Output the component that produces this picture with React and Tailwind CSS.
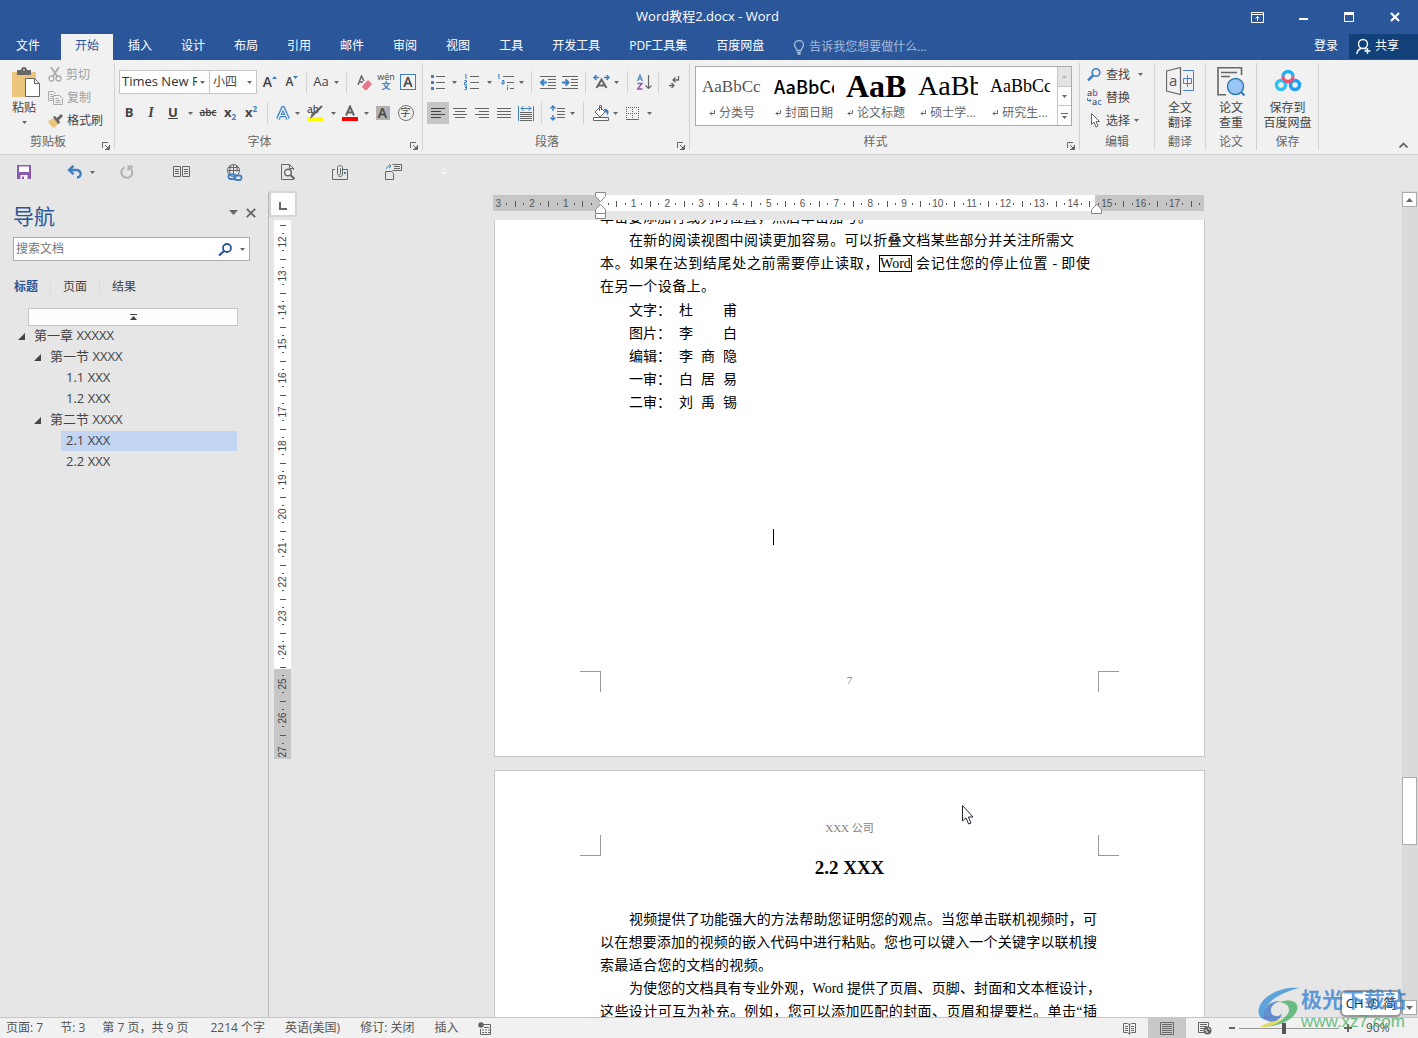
import React from "react";

const tabs = ["插入", "设计", "布局", "引用", "邮件", "审阅", "视图", "工具", "开发工具", "PDF工具集", "百度网盘"];

const styleItems = [
  { label: "分类号", preview: "text-[17px] text-[#555] font-['Liberation_Serif',serif]" },
  { label: "封面日期", preview: "text-[18px] text-black font-medium font-['Noto_Sans_CJK_SC',sans-serif]" },
  { label: "论文标题", preview: "text-[32px] text-black font-bold font-['Liberation_Serif',serif]" },
  { label: "硕士学...", preview: "text-[28px] text-black font-['Liberation_Serif',serif]" },
  { label: "研究生...", preview: "text-[18px] text-black font-['Liberation_Serif',serif]" },
];

const outline = [
  { text: "第一章 XXXXX", pad: "ml-3", open: true },
  { text: "第一节 XXXX", pad: "ml-7", open: true },
  { text: "1.1 XXX", pad: "ml-[61px]" },
  { text: "1.2 XXX", pad: "ml-[61px]" },
  { text: "第二节 XXXX", pad: "ml-7", open: true },
  { text: "2.1 XXX", pad: "ml-[61px]", active: true },
  { text: "2.2 XXX", pad: "ml-[61px]" },
];

const credits = [
  ["文字：", ["杜", "甫"]],
  ["图片：", ["李", "白"]],
  ["编辑：", ["李", "商", "隐"]],
  ["一审：", ["白", "居", "易"]],
  ["二审：", ["刘", "禹", "锡"]],
];

const hRuler = [3, 2, 1, "", 1, 2, 3, 4, 5, 6, 7, 8, 9, 10, 11, 12, 13, 14, 15, 16, 17];
const vRuler = [12, 13, 14, 15, 16, 17, 18, 19, 20, 21, 22, 23, 24, 25, 26, 27];

const Icon = ({ w = 16, h = 16, children, className = "" }) => (
  <svg
    width={w}
    height={h}
    viewBox={`0 0 ${w} ${h}`}
    fill="none"
    stroke="#666"
    className={`shrink-0 ${className}`}
    aria-hidden="true"
  >
    {children}
  </svg>
);

const Caret = ({ className = "" }) => (
  <Icon w={5} h={3} className={className}>
    <path d="M0 0h5L2.5 3z" fill="#666" stroke="none" />
  </Icon>
);

const Tool = ({ w = "w-[22px]", label, children, className = "" }) => (
  <button
    aria-label={label}
    className={`h-[22px] shrink-0 flex items-center justify-center ${w} ${className}`}
  >
    {children}
  </button>
);

const Drop = ({ w = "w-2" }) => (
  <Tool w={w} label="更多选项">
    <Caret />
  </Tool>
);

const Sep = ({ w = "w-2" }) => (
  <span className={`h-[22px] shrink-0 flex justify-center ${w}`}>
    <span className="w-px bg-[#d2d2d2]" />
  </span>
);

const Launcher = () => (
  <button aria-label="对话框启动器" className="absolute right-1 bottom-0">
    <Icon w={8} h={8}>
      <path d="M.5 6V.5H6M3 3l3 3M7.5 3v4.5H3" />
      <path d="M7 4v3H4z" fill="#666" stroke="none" />
    </Icon>
  </button>
);

const Group = ({ label, width, children, launcher }) => (
  <section className={`relative shrink-0 flex flex-col border-r border-[#d2d2d2] ${width}`}>
    <div className="h-[71px] shrink-0">{children}</div>
    <div className="shrink-0 text-center leading-4 text-[#666]">{label}</div>
    {launcher && <Launcher />}
  </section>
);

const TitleBar = () => (
  <div className="flex h-[34px] items-center text-white">
    <div className="w-[181px]" />
    <h1 className="flex-1 text-center text-[13px]">Word教程2.docx - Word</h1>
    <button aria-label="功能区显示选项" className="flex w-[46px] justify-center">
      <Icon w={13} h={11}>
        <path d="M.5.5h12v10H.5zM.5 2.5h12M6.5 9V4.500M4.500 6.500l2-2 2 2" stroke="#fff" />
      </Icon>
    </button>
    <button aria-label="最小化" className="flex w-[46px] justify-center">
      <Icon w={9} h={8}>
        <path d="M0 6h9" stroke="#fff" strokeWidth="2" />
      </Icon>
    </button>
    <button aria-label="最大化" className="flex w-[46px] justify-center">
      <Icon w={10} h={10}>
        <path d="M.5.5h9v9h-9z" stroke="#fff" />
        <path d="M0 1.500h10" stroke="#fff" strokeWidth="3" />
      </Icon>
    </button>
    <button aria-label="关闭" className="flex w-[46px] justify-center">
      <Icon w={10} h={10}>
        <path d="M1 1l8 8M9 1L1 9" stroke="#fff" strokeWidth="2.200" />
      </Icon>
    </button>
  </div>
);

const TabBar = () => (
  <nav className="flex h-[26px] items-stretch gap-px text-white">
    <button className="w-[56px] shrink-0 pb-[2px]">文件</button>
    <button className="ml-1 shrink-0 bg-[#f1f1f1] px-[14px] pb-[2px] text-[#2b579a]">开始</button>
    {tabs.map((tab) => (
      <button key={tab} className="shrink-0 whitespace-nowrap px-[14px] pb-[2px]">
        {tab}
      </button>
    ))}
    <button className="ml-[10px] flex items-center gap-1 whitespace-nowrap px-1 text-[#a5bad8]">
      <Icon w={12} h={15}>
        <path d="M4 10.500C4 8.500 1.500 7.500 1.500 5a4.500 4.500 0 0 1 9 0c0 2.500-2.500 3.500-2.500 5.500zM4 12.500h4M4.500 14h3" stroke="#a5bad8" strokeWidth="1.300" />
      </Icon>
      告诉我您想要做什么...
    </button>
    <div className="flex-1" />
    <button className="shrink-0 px-[10px] pb-[2px]">登录</button>
    <button className="mb-px flex w-[69px] shrink-0 items-center gap-1 bg-[#124078] pl-[7px]">
      <Icon w={15} h={17}>
        <circle cx="7" cy="6" r="4.500" stroke="#fff" strokeWidth="1.400" />
        <path d="M.8 16c.3-3 2-4.500 4-5.500M9 10.500l1.500 1M11.500 10v6M8.500 13h6" stroke="#fff" strokeWidth="1.400" />
      </Icon>
      <span className="pb-[2px]">共享</span>
    </button>
  </nav>
);

const Clipboard = () => (
  <Group label={<span className="mr-[18px]">剪贴板</span>} width="w-[115px]" launcher>
    <div className="flex h-full">
      <button className="flex w-12 shrink-0 flex-col items-center pt-1">
        <Icon w={30} h={31} className="ml-1">
          <path d="M1 5h24v25H1z" fill="#ecc57c" stroke="none" />
          <path d="M6 8V3h4c0-4 6-4 6 0h4v5z" fill="#666" stroke="none" />
          <path d="M12 3h2" stroke="#fff" />
          <path d="M14.500 11.500h9l5 5v13h-14z" fill="#fff" />
          <path d="M23.500 11.500v5h5" />
        </Icon>
        <span className="mt-px leading-[18px]">粘贴</span>
        <Caret className="mt-1" />
      </button>
      <div className="flex flex-col">
        <button className="flex h-[23px] items-center gap-1 text-[#a0a0a0]">
          <Icon w={14} h={15}>
            <path d="M3 0l6 9M11 0L5 9" stroke="#aaa" strokeWidth="1.800" />
            <circle cx="3.500" cy="11.500" r="2.500" stroke="#aaa" strokeWidth="1.300" />
            <circle cx="10.500" cy="11.500" r="2.500" stroke="#aaa" strokeWidth="1.300" />
          </Icon>
          剪切
        </button>
        <button className="flex h-[23px] items-center gap-1 text-[#a0a0a0]">
          <Icon w={15} h={14}>
            <path d="M5 9.500H.5v-9h5l2 2M2 3.500h3M2 5.500h3M2 7.500h3" stroke="#aaa" />
            <path d="M5.500 4.500h6l3 3v6h-9zM7.500 7.500h3M7.500 9.500h5M7.500 11.500h5" stroke="#aaa" />
          </Icon>
          复制
        </button>
        <button className="flex h-[23px] items-center gap-1">
          <Icon w={15} h={14}>
            <path d="M6 4L0 7c1 3 3 5 6 7l5-5z" fill="#ecc57c" stroke="none" />
            <path d="M5 3l2-1 2 2 4-4 2 2-4 4 1 3-2 1z" fill="#666" stroke="none" />
          </Icon>
          格式刷
        </button>
      </div>
    </div>
  </Group>
);

const FontGroup = () => (
  <Group label={<span className="mr-[18px]">字体</span>} width="w-[308px]" launcher>
    <div className="flex h-[38px] items-center pl-1">
      <div className="flex h-6 w-[91px] items-center border border-[#c6c6c6] bg-white pr-1">
        <select aria-label="字体" className="mr-[3px] min-w-0 flex-1 appearance-none pl-[2px] text-[13px] text-[#333]">
          <option>Times New Roman</option>
        </select>
        <Caret />
      </div>
      <div className="-ml-px mr-px flex h-6 w-12 items-center border border-[#c6c6c6] bg-white pr-1">
        <select aria-label="字号" className="min-w-0 flex-1 appearance-none pl-[3px]">
          <option>小四</option>
        </select>
        <Caret />
      </div>
      <Tool w="w-6" label="增大字号">
        <span className="text-sm font-semibold">A</span>
        <Icon w={5} h={3} className="mb-[10px]"><path d="M0 3h5L2.500 0z" fill="#3f7fbf" stroke="none" /></Icon>
      </Tool>
      <Tool w="w-5" label="减小字号">
        <span className="text-xs font-semibold">A</span>
        <Icon w={5} h={3} className="mb-[10px]"><path d="M0 0h5L2.500 3z" fill="#3f7fbf" stroke="none" /></Icon>
      </Tool>
      <Sep />
      <Tool w="w-[22px]" label="更改大小写"><span className="text-[13px]">Aa</span></Tool>
      <Drop />
      <Sep w="w-[13px]" />
      <Tool label="清除所有格式">
        <Icon w={15} h={15}>
          <path d="M7 9l4-4 4 4-5 6H8l-3-3z" fill="#e8798a" stroke="none" />
          <path d="M1 10L4.500 1 7 6M2.500 7H6" strokeWidth="1.500" />
        </Icon>
      </Tool>
      <Tool label="拼音指南" className="flex-col">
        <span className="text-[9px] leading-[8px]">wén</span>
        <span className="text-[9px] font-bold leading-[10px] text-[#3f7fbf]">文</span>
      </Tool>
      <Tool label="字符边框">
        <span className="flex h-4 w-4 items-center justify-center border border-[#3f7fbf] text-sm font-semibold">A</span>
      </Tool>
    </div>
    <div className="flex h-6 items-center pl-[3px]">
      <Tool label="加粗"><b className="text-[13px]">B</b></Tool>
      <Tool label="倾斜"><i className="text-sm font-bold font-['Liberation_Serif',serif]">I</i></Tool>
      <Tool label="下划线"><b className="text-[13px] underline">U</b></Tool>
      <Drop w="w-3" />
      <Tool w="w-6" label="删除线"><s className="text-[10px] font-semibold">abc</s></Tool>
      <Tool w="w-5" label="下标">
        <b className="text-[13px]">x</b><b className="mt-2 text-[8px] text-[#3f7fbf]">2</b>
      </Tool>
      <Tool label="上标">
        <b className="text-[13px]">x</b><b className="mb-2 text-[8px] text-[#3f7fbf]">2</b>
      </Tool>
      <Sep w="w-[11px]" />
      <Tool w="w-5" label="文本效果">
        <Icon w={14} h={15}>
          <path d="M2 13L7 1.500 12 13M4 9.500h6" stroke="#b4d4f0" strokeWidth="5" strokeLinejoin="round" />
          <path d="M2 13L7 1.500 12 13M4 9.500h6" stroke="#3f7fbf" strokeWidth="3.200" />
          <path d="M2 13L7 2 12 13M4 9.500h6" stroke="#fff" strokeWidth="1.200" />
        </Icon>
      </Tool>
      <Drop />
      <Tool w="w-7" label="突出显示" className="flex-col">
        <Icon w={16} h={16}>
          <path d="M0 12h16v4H0z" fill="#ff0" stroke="none" />
          <path d="M15 1L8 8l-3 3 1-4" strokeWidth="2" />
          <text x="0" y="8" fontSize="10" fontWeight="600" fill="#555" stroke="none">ab</text>
        </Icon>
      </Tool>
      <Drop />
      <Tool w="w-[25px]" label="字体颜色">
        <Icon w={16} h={16}>
          <path d="M0 12h16v4H0z" fill="#f00" stroke="none" />
          <path d="M4 10.500L8 1.500l4 9M5.500 7.500h5" strokeWidth="2" />
        </Icon>
      </Tool>
      <Drop />
      <Tool w="w-[25px]" label="字符底纹">
        <span className="flex h-[14px] w-[14px] items-center justify-center bg-[#b1b1b1] text-sm font-semibold">A</span>
      </Tool>
      <Tool w="w-[21px]" label="带圈字符">
        <span className="flex h-4 w-4 items-center justify-center rounded-full border border-[#777] text-[10px]">字</span>
      </Tool>
    </div>
  </Group>
);

const ParagraphGroup = () => (
  <Group label={<span className="mr-[18px]">段落</span>} width="w-[267px]" launcher>
    <div className="flex h-[38px] items-center pl-1">
      <Tool label="项目符号">
        <Icon w={14} h={16}>
          <path d="M5 2.500h9M5 8.500h9M5 14.500h9" />
          <path d="M0 2.500h3M0 8.500h3M0 14.500h3" stroke="#3f7fbf" strokeWidth="3" />
        </Icon>
      </Tool>
      <Drop w="w-[10px]" />
      <Tool w="w-[26px]" label="编号">
        <Icon w={16} h={16}>
          <path d="M6 2.500h9M6 8.500h9M6 14.500h9" />
          <path d="M1 1l1-.500V5M.5 6.500h2v2h-2v2H3M.5 12h2v3.500h-2M1 13.500h1.500" stroke="#3f7fbf" />
        </Icon>
      </Tool>
      <Drop />
      <Tool w="w-6" label="多级列表">
        <Icon w={17} h={16}>
          <path d="M6 2.500h11M10 8.500h7M13 14.500h4" />
          <path d="M1 1l1-.500V5M5 6.500h2V10H5V8h2M10.500 11v1M10.500 13v3" stroke="#3f7fbf" />
        </Icon>
      </Tool>
      <Drop />
      <Sep w="w-3" />
      <Tool label="减少缩进量">
        <Icon w={16} h={14}>
          <path d="M0 1.500h16M8 4.500h8M8 7.500h8M8 10.500h8M0 13.500h16" />
          <path d="M7 7.500H1.500M4 4.500l-3 3 3 3" stroke="#3f7fbf" strokeWidth="2" />
        </Icon>
      </Tool>
      <Tool label="增加缩进量">
        <Icon w={16} h={14}>
          <path d="M0 1.500h16M9 4.500h7M9 7.500h7M9 10.500h7M0 13.500h16" />
          <path d="M0 7.500h6M3.500 4.500l3 3-3 3" stroke="#3f7fbf" strokeWidth="2" />
        </Icon>
      </Tool>
      <Sep />
      <Tool w="w-6" label="中文版式">
        <Icon w={17} h={14}>
          <path d="M3.500 13L8.500 4.500 13.500 13M5.500 10.500h6" strokeWidth="2" />
          <path d="M6 2.500H1M3.500 0L1 2.500 3.500 5M11 2.500h5M13.500 0L16 2.500 13.500 5" stroke="#3f7fbf" strokeWidth="1.400" />
        </Icon>
      </Tool>
      <Drop w="w-[6px]" />
      <Sep w="w-4" />
      <Tool w="w-[18px]" label="排序">
        <Icon w={15} h={16}>
          <path d="M.5 7L3 1l2.500 6M1.500 5h3" stroke="#3f7fbf" strokeWidth="1.200" />
          <path d="M.5 9.500h4.500l-4.500 5.500H5.500" stroke="#8e55a8" strokeWidth="1.400" />
          <path d="M11.500 1v13M8.500 11.500l3 3 3-3" strokeWidth="1.200" />
        </Icon>
      </Tool>
      <Sep w="w-[10px]" />
      <Tool label="显示编辑标记">
        <Icon w={11} h={14}>
          <path d="M9.500 1v4H4M6.500 2.500L4 5l2.500 2.500M0 10.500h5M2.500 8L5 10.500 2.500 13" strokeWidth="1.300" />
        </Icon>
      </Tool>
    </div>
    <div className="flex h-6 items-center pl-1">
      <Tool label="左对齐" className="bg-[#c5c5c5]">
        <Icon w={14} h={11}><path d="M0 .5h14M0 3.500h10M0 6.500h14M0 9.500h10" stroke="#444" /></Icon>
      </Tool>
      <Tool label="居中">
        <Icon w={14} h={11}><path d="M0 .5h14M2 3.500h10M0 6.500h14M2 9.500h10" /></Icon>
      </Tool>
      <Tool label="右对齐">
        <Icon w={14} h={11}><path d="M0 .5h14M4 3.500h10M0 6.500h14M4 9.500h10" /></Icon>
      </Tool>
      <Tool label="两端对齐">
        <Icon w={14} h={11}><path d="M0 .5h14M0 3.500h14M0 6.500h14M0 9.500h14" /></Icon>
      </Tool>
      <Tool label="分散对齐">
        <Icon w={16} h={15}>
          <path d="M2 6.500h12M2 8.500h12M2 10.500h12M2 12.500h12M2 14.500h12" />
          <path d="M.5 0v15M15.500 0v15M3 2.500h10M5.500 0L3 2.500 5.500 5M10.500 0L13 2.500 10.500 5" stroke="#3f7fbf" />
        </Icon>
      </Tool>
      <Sep />
      <Tool w="w-6" label="行和段落间距">
        <Icon w={15} h={16}>
          <path d="M7 3.500h8M7 6.500h8M7 9.500h8M7 12.500h8" />
          <path d="M3 6V1M.5 3.500L3 1l2.500 2.500M3 10v5M.5 12.500L3 15l2.500-2.500" stroke="#3f7fbf" strokeWidth="1.400" />
        </Icon>
      </Tool>
      <Drop w="w-[6px]" />
      <Sep w="w-4" />
      <Tool w="w-5" label="底纹">
        <Icon w={17} h={16}>
          <path d="M7 2l5 5-5 5-5-5zM6.500 6V.5h2V5" fill="#fff" />
          <path d="M11 4c4-.5 6 2 3.500 6.500C14 8 13 7 12 7z" fill="#3f7fbf" stroke="none" />
          <path d="M.5 12.500h15v3H.5z" fill="#fff" />
        </Icon>
      </Tool>
      <Drop />
      <Tool w="w-[26px]" label="边框">
        <Icon w={13} h={13}>
          <path d="M0 .5h13M.5 0v12M12.500 0v12M6.500 0v12M0 6.500h13" strokeDasharray="1 1" />
          <path d="M0 12.500h13" />
        </Icon>
      </Tool>
      <Drop />
    </div>
  </Group>
);

const StylesGroup = () => (
  <Group label={<span className="mr-[18px]">样式</span>} width="w-[390px]" launcher>
    <div className="flex h-full items-start pl-[5px] pt-[3px]">
      <div className="flex h-[60px] w-[377px] border border-[#ababab] bg-white">
        <div className="flex flex-1">
          {styleItems.map((s) => (
            <button key={s.label} className="w-[72px] shrink-0 px-[6px]">
              <span className={`flex h-[34px] items-center overflow-hidden leading-none ${s.preview}`}>
                AaBbCc
              </span>
              <span className="flex h-5 items-center justify-center gap-1 whitespace-nowrap text-[#666]">
                <Icon w={6} h={6}>
                  <path d="M5.500 0v3.500H1M3 1.500l-2 2 2 2" />
                </Icon>
                {s.label}
              </span>
            </button>
          ))}
        </div>
        <div className="flex w-[14px] flex-col border-l border-[#c6c6c6]">
          <button aria-label="上一行" className="flex flex-1 items-center justify-center bg-[#e3e3e3]">
            <Icon w={5} h={3}><path d="M0 3h5L2.500 0z" fill="#b5b5b5" stroke="none" /></Icon>
          </button>
          <button aria-label="下一行" className="flex flex-1 items-center justify-center border-y border-[#c6c6c6]">
            <Caret />
          </button>
          <button aria-label="其他" className="flex flex-1 items-center justify-center">
            <Icon w={7} h={6}>
              <path d="M0 .5h7" />
              <path d="M1 3h5L3.500 6z" fill="#666" stroke="none" />
            </Icon>
          </button>
        </div>
      </div>
    </div>
  </Group>
);

const EditGroup = () => (
  <Group label="编辑" width="w-[75px]">
    <div className="flex flex-col pl-[7px]">
      <button className="flex h-[23px] items-center gap-1">
        <Icon w={15} h={13}>
          <circle cx="9" cy="4.500" r="3.800" stroke="#3f7fbf" strokeWidth="1.600" />
          <path d="M6 7.500L1 12.500" stroke="#3f7fbf" strokeWidth="2.500" />
        </Icon>
        查找
        <Caret className="ml-1" />
      </button>
      <button className="flex h-[23px] items-center gap-1">
        <Icon w={15} h={17}>
          <text x="0" y="7" fontSize="9" fontWeight="600" fill="#555" stroke="none">a<tspan fill="#8e55a8">b</tspan></text>
          <text x="5" y="16" fontSize="9" fontWeight="600" fill="#555" stroke="none">a<tspan fill="#3f7fbf">c</tspan></text>
          <path d="M.5 9v2.500H4M2.500 10L4 11.500 2.500 13" stroke="#3f7fbf" />
        </Icon>
        替换
      </button>
      <button className="flex h-[23px] items-center gap-1">
        <Icon w={15} h={15}>
          <path d="M4.500.5v11l2.500-2.500 2 5 2-1-2-4.500h3.500z" fill="#fff" />
        </Icon>
        选择
        <Caret />
      </button>
    </div>
  </Group>
);

const BigTool = ({ icon, lines }) => (
  <button className="flex w-full flex-col items-center pt-1">
    {icon}
    <span className="mt-1 leading-[15px]">
      {lines[0]}
      <br />
      {lines[1]}
    </span>
  </button>
);

const Ribbon = () => (
  <div className="relative flex h-[95px] border-b border-[#d2d2d2] bg-[#f1f1f1] pb-1 pt-[3px]">
    <Clipboard />
    <FontGroup />
    <ParagraphGroup />
    <StylesGroup />
    <EditGroup />
    <Group label="翻译" width="w-[51px]">
      <BigTool
        lines={["全文", "翻译"]}
        icon={
          <Icon w={28} h={29}>
            <path d="M.5 4L14.500.500v27L.5 24z" strokeWidth="1.200" />
            <path d="M17 3.500h10.500v20H17" stroke="#4a7fd4" />
            <path d="M17.500 11.500h8v5h-8zM21.500 8v12" stroke="#4a7fd4" />
            <text x="3" y="19" fontSize="15" fill="#555" stroke="none">a</text>
          </Icon>
        }
      />
    </Group>
    <Group label="论文" width="w-[51px]">
      <BigTool
        lines={["论文", "查重"]}
        icon={
          <Icon w={28} h={29}>
            <path d="M24.500 8V.800H1v27h8M4 5.500h16M4 9.500h9" strokeWidth="1.600" />
            <circle cx="18.500" cy="19.500" r="8" fill="#9ac6f5" stroke="#2f7cab" strokeWidth="1.500" />
            <path d="M24 25l3.500 3.500" stroke="#2f7cab" strokeWidth="2" />
          </Icon>
        }
      />
    </Group>
    <Group label="保存" width="w-[62px]">
      <BigTool
        lines={["保存到", "百度网盘"]}
        icon={
          <Icon w={28} h={29}>
            <circle cx="7" cy="18" r="4.500" stroke="#2fc2f0" strokeWidth="3.500" />
            <circle cx="21" cy="18" r="4.500" stroke="#1e9ff2" strokeWidth="3.500" />
            <path d="M9 9.500a5 5 0 0 1 10 0" stroke="#1fb0f4" strokeWidth="3.500" />
            <path d="M9 9.500a5 5 0 0 0 10 0" stroke="#f0506e" strokeWidth="3.500" />
          </Icon>
        }
      />
    </Group>
    <button aria-label="折叠功能区" className="ml-auto mr-[10px] self-end pb-[2px]">
      <Icon w={9} h={6}>
        <path d="M.5 5.500l4-4 4 4" strokeWidth="1.800" />
      </Icon>
    </button>
  </div>
);

const QuickAccess = () => (
  <div className="flex h-9 shrink-0 items-center pb-[2px] pl-3">
    <button aria-label="保存" className="flex w-6 justify-center">
      <Icon w={14} h={14}>
        <path d="M0 0h14v14H0z" fill="#8b5bb0" stroke="none" />
        <path d="M2 1.500h10v5.500H2zM3.500 10h7v4h-7z" fill="#fff" stroke="none" />
        <path d="M5 11.500h2V14H5z" fill="#8b5bb0" stroke="none" />
      </Icon>
    </button>
    <button aria-label="撤消" className="ml-7 flex w-5 justify-center">
      <Icon w={15} h={14}>
        <path d="M2 5h7c6 0 6 7.500 1 7.500M6.500.8L2 5l4.500 4.200" stroke="#3f7fbf" strokeWidth="2.400" />
      </Icon>
    </button>
    <button aria-label="撤消列表" className="ml-[6px]"><Caret /></button>
    <button aria-label="重复" className="ml-[22px] flex w-5 justify-center">
      <Icon w={14} h={14}>
        <path d="M4.500 2.300a5.500 5.500 0 1 0 5.500.500M8.500 5.500V1.500H13" stroke="#b1b1b1" strokeWidth="2" />
      </Icon>
    </button>
    <button aria-label="阅读视图" className="ml-[34px] flex w-5 justify-center">
      <Icon w={17} h={12}>
        <path d="M.5.5h7v10h-7zM9.500.5h7v10h-7zM2 3.500h4M2 5.500h4M2 7.500h4M11 3.500h4M11 5.500h4M11 7.500h4" />
      </Icon>
    </button>
    <button aria-label="超链接" className="ml-[33px] flex w-5 justify-center">
      <Icon w={17} h={17}>
        <circle cx="7.500" cy="6.500" r="6" />
        <path d="M1.500 6.500h12M2.500 3.500h10M7.500.5v10M5 1.500c-1.500 3-1.500 6-1 9M10 1.500c1 2 1.500 4 1 6" />
        <rect x="2.500" y="10.500" width="7" height="4.500" rx="2.200" stroke="#3f7fbf" strokeWidth="1.800" />
        <rect x="8.500" y="11.500" width="7" height="4.500" rx="2.200" stroke="#3f7fbf" strokeWidth="1.800" />
      </Icon>
    </button>
    <button aria-label="打印预览" className="ml-[34px] flex w-5 justify-center">
      <Icon w={14} h={16}>
        <path d="M12.500 13v2.500H.5V.5h8l4 4V6M8.500.5v4h4" />
        <circle cx="7" cy="8.500" r="3.300" fill="#eee" strokeWidth="1.400" />
        <path d="M9.500 11l4 4" strokeWidth="2" />
      </Icon>
    </button>
    <button aria-label="附件" className="ml-8 flex w-5 justify-center">
      <Icon w={16} h={15}>
        <path d="M3 4.500H.5v10h15v-10H11" />
        <path d="M8.500 3.500v5c0 2-3 2-3 0V2.500c0-2.500 5-2.500 5 0V9c0 3-3 3-4 2" />
        <path d="M12 7h2v2h-2z" fill="#3f7fbf" stroke="none" />
      </Icon>
    </button>
    <button aria-label="切换窗口" className="ml-[33px] flex w-5 justify-center">
      <Icon w={17} h={16}>
        <path d="M7.500.5h9v6h-9M9 2.500h6M9 4.500h6M.5 7.500h6l2 2v6h-8z" />
        <path d="M1.500 5c0-2 1-3 4.500-3M4 0l2 2-2 2" stroke="#3f7fbf" />
      </Icon>
    </button>
    <button aria-label="自定义快速访问工具栏" className="ml-[38px]">
      <Icon w={6} h={6}>
        <path d="M0 .5h6" stroke="#f5f5f5" />
        <path d="M0 3h6L3 6z" fill="#f5f5f5" stroke="none" />
      </Icon>
    </button>
  </div>
);

const NavPane = () => (
  <aside className="mt-px flex w-[269px] shrink-0 flex-col border-r border-[#b9b9b9]">
    <div className="flex h-[45px] items-center pl-[13px] pt-[2px]">
      <h2 className="flex-1 text-[21px] text-[#2b579a]">导航</h2>
      <button aria-label="任务窗格选项" className="mb-[6px]">
        <Icon w={9} h={5}><path d="M0 0h9L4.500 5z" fill="#666" stroke="none" /></Icon>
      </button>
      <button aria-label="关闭导航" className="mb-[6px] ml-2 mr-3">
        <Icon w={10} h={10}><path d="M.8.8l8.400 8.400M9.200.8L.8 9.200" strokeWidth="1.800" /></Icon>
      </button>
    </div>
    <div className="ml-[13px] flex h-6 w-[237px] items-center border border-[#ababab] bg-white pl-[2px] pr-1">
      <input
        type="search"
        aria-label="搜索文档"
        placeholder="搜索文档"
        className="min-w-0 flex-1 outline-none placeholder:text-[#777]"
      />
      <button aria-label="搜索">
        <Icon w={14} h={13}>
          <circle cx="9" cy="5" r="4" stroke="#2b579a" strokeWidth="1.800" />
          <path d="M6 8l-5 4.500" stroke="#2b579a" strokeWidth="2.200" />
        </Icon>
      </button>
      <button aria-label="搜索选项" className="ml-2"><Caret /></button>
    </div>
    <div className="mt-4 flex h-5 items-center pl-[14px] text-[#444]">
      <button className="pr-3 font-bold text-[#2b579a]">标题</button>
      <button className="border-x border-[#dcdcdc] px-3">页面</button>
      <button className="px-3">结果</button>
    </div>
    <button aria-label="跳转到开头" className="ml-7 mt-[11px] flex h-[18px] w-[210px] items-center justify-center border border-[#c6c6c6] bg-[#fdfdfd]">
      <Icon w={7} h={6}>
        <path d="M0 .5h7" stroke="#444" />
        <path d="M0 6h7L3.500 2z" fill="#444" stroke="none" />
      </Icon>
    </button>
    <ul className="pr-[31px] text-[13px] text-[#444]">
      {outline.map((item) => (
        <li key={item.text} className="h-[21px]">
          <div className={`flex h-5 items-center ${item.pad} ${item.active ? "bg-[#c2d5f2]" : ""}`}>
            {item.open && (
              <button aria-label="折叠" className="flex w-[22px] justify-center pr-1">
                <Icon w={7} h={7}><path d="M7 0v7H0z" fill="#444" stroke="none" /></Icon>
              </button>
            )}
            <button className={item.open ? "" : "pl-[5px]"}>{item.text}</button>
          </div>
        </li>
      ))}
    </ul>
  </aside>
);

const VerticalRuler = () => (
  <div className="w-7 shrink-0">
    <div className="flex h-[26px] w-7 items-center justify-center border-2 border-[#d6d6d6] bg-[#fdfdfd]">
      <Icon w={8} h={8} className="mt-[3px]"><path d="M1 0v7h7" strokeWidth="2" /></Icon>
    </div>
    <div className="ml-[5px] mt-[3px] h-[539px] w-[17px] overflow-hidden bg-[linear-gradient(#fff_449px,#c6c6c6_449px)] pt-px text-[10px] text-[#444] font-['Liberation_Sans',sans-serif]">
      {vRuler.map((n) => (
        <div key={n} className="grid h-[34px] grid-rows-4 items-center justify-items-center leading-none">
          <span className="h-px w-[6px] bg-[#555]" />
          <span className="h-px w-[2px] bg-[#555]" />
          <span className="-rotate-90">{n}</span>
          <span className="h-px w-[2px] bg-[#555]" />
        </div>
      ))}
    </div>
  </div>
);

const HorizontalRuler = () => (
  <div className="relative h-4 w-[711px]">
    <div className="flex h-full w-full overflow-hidden bg-[linear-gradient(90deg,#c6c6c6_107px,#fff_107px,#fff_602px,#c6c6c6_602px)] pl-px pt-px text-[10px] text-[#555] font-['Liberation_Sans',sans-serif]">
      {hRuler.map((n, i) => (
        <div key={i} className="flex flex-1 items-center leading-none">
          <span className="flex w-1/4 justify-center">{n}</span>
          <span className="flex w-1/4 justify-center"><span className="h-[2px] w-px bg-[#555]" /></span>
          <span className="flex w-1/4 justify-center"><span className="h-[6px] w-px bg-[#555]" /></span>
          <span className="flex w-1/4 justify-center"><span className="h-[2px] w-px bg-[#555]" /></span>
        </div>
      ))}
    </div>
    <Icon w={11} h={28} className="absolute -top-[3px] left-[102px]">
      <path d="M.5.5h10v4l-5 5-5-5zM.5 21.500v-4l5-5 5 5v4zM.5 21.500h10v5H.5z" fill="#fff" stroke="#888" />
    </Icon>
    <Icon w={11} h={10} className="absolute left-[598px] top-[9px]">
      <path d="M.5 9.500v-4l5-5 5 5v4z" fill="#fff" stroke="#888" />
    </Icon>
  </div>
);

// Each printed line is justified to its own measure
const Line = ({ w, indent, children }) => (
  <div className={`whitespace-nowrap [text-align-last:justify] ${w} ${indent ? "ml-[29px]" : ""}`}>
    {children}
  </div>
);

const Document = () => (
  <main className="relative flex min-w-0 flex-1 flex-col items-center">
    <div className="h-[29px] shrink-0 pr-[2px] pt-1">
      <HorizontalRuler />
    </div>
    <div className="flex min-h-0 flex-1 flex-col gap-[13px] overflow-hidden text-sm leading-[23px] text-black font-['Liberation_Serif','Noto_Sans_CJK_SC',serif]">
      <article className="relative w-[711px] shrink-0 overflow-hidden border border-t-0 border-[#c6c6c6] bg-white pb-16">
        <div className="-mt-[14px] pl-[105px]">
          <Line w="w-[272px]">单击要添加行或列的位置，然后单击加号。</Line>
          <Line w="w-[445px]" indent>在新的阅读视图中阅读更加容易。可以折叠文档某些部分并关注所需文</Line>
          <Line w="w-[490px]">
            本。如果在达到结尾处之前需要停止读取，<span className="border border-black">Word</span> 会记住您的停止位置 - 即使
          </Line>
          <Line w="w-[115px]">在另一个设备上。</Line>
          <div className="pt-px">
            {credits.map(([role, name]) => (
              <div key={role} className="ml-[29px] flex">
                <span className="w-[50px]">{role}</span>
                <span className="flex w-[58px] justify-between">
                  {name.map((c) => (
                    <span key={c}>{c}</span>
                  ))}
                </span>
              </div>
            ))}
          </div>
        </div>
        <footer className="mt-[257px] flex justify-between px-[85px]">
          <span className="h-[21px] w-[21px] border-r border-t border-[#999]" />
          <span className="text-[11px] leading-[18px] text-[#808080]">7</span>
          <span className="h-[21px] w-[21px] border-l border-t border-[#999]" />
        </footer>
        <span className="absolute left-[278px] top-[309px] h-4 w-px bg-black" />
      </article>
      <article className="w-[711px] shrink-0 border border-[#c6c6c6] bg-white pt-[46px]">
        <header className="flex items-end justify-between px-[85px]">
          <span className="h-[21px] w-[21px] border-b border-r border-[#999]" />
          <span className="mb-4 text-[11px] text-[#808080]">XXX 公司</span>
          <span className="h-[21px] w-[21px] border-b border-l border-[#999]" />
        </header>
        <h2 className="text-center text-[19px] font-bold leading-6">2.2 XXX</h2>
        <div className="mt-7 pl-[105px]">
          <Line w="w-[468px]" indent>视频提供了功能强大的方法帮助您证明您的观点。当您单击联机视频时，可</Line>
          <Line w="w-[497px]">以在想要添加的视频的嵌入代码中进行粘贴。您也可以键入一个关键字以联机搜</Line>
          <Line w="w-[172px]">索最适合您的文档的视频。</Line>
          <Line w="w-[472px]" indent>为使您的文档具有专业外观，Word 提供了页眉、页脚、封面和文本框设计，</Line>
          <Line w="w-[497px]">这些设计可互为补充。例如，您可以添加匹配的封面、页眉和提要栏。单击“插</Line>
          <Line w="w-[497px]">入”，然后从不同库中选择所需元素。主题和样式也有助于文档保持协调。当您</Line>
        </div>
      </article>
    </div>
    <Icon w={12} h={20} className="absolute left-[665px] top-[614px]">
      <path d="M.5.5v15.500l3.500-3.200 2.600 6.200 2.400-1-2.600-6H11z" fill="#fff" stroke="#223" />
    </Icon>
  </main>
);

const ScrollBar = () => (
  <div className="flex w-4 shrink-0 flex-col bg-[#dadada] pb-[2px] pt-px">
    <button aria-label="向上滚动" className="flex h-[15px] w-[15px] items-center justify-center border border-[#ababab] bg-white">
      <Icon w={7} h={4}><path d="M0 4h7L3.500 0z" fill="#666" stroke="none" /></Icon>
    </button>
    <div className="flex-[570]" />
    <div className="h-[68px] w-[15px] border border-[#ababab] bg-white" />
    <div className="flex-[155]" />
    <button aria-label="向下滚动" className="flex h-[15px] w-[15px] items-center justify-center border border-[#ababab] bg-white">
      <Icon w={7} h={4}><path d="M0 0h7L3.500 4z" fill="#666" stroke="none" /></Icon>
    </button>
  </div>
);

const StatusBar = () => (
  <footer className="flex h-[21px] shrink-0 items-center gap-5 whitespace-nowrap border-t border-[#c6c6c6] bg-[#f1f1f1] pl-[6px] text-[#555]">
    <div className="flex gap-[17px] pr-[2px]">
      <span>页面: 7</span>
      <span>节: 3</span>
      <span>第 7 页，共 9 页</span>
    </div>
    <span>2214 个字</span>
    <span>英语(美国)</span>
    <span>修订: 关闭</span>
    <span>插入</span>
    <Icon w={13} h={13}>
      <path d="M4 2.500h8.500v10h-10V7M6 5.500h5" />
      <path d="M4 8h8M4 10.500h8" strokeDasharray="2 1" />
      <circle cx="3" cy="3" r="2.800" fill="#666" stroke="none" />
    </Icon>
    <div className="ml-auto flex h-full items-center">
      <button aria-label="阅读视图" className="flex h-full w-[38px] items-center justify-center">
        <Icon w={13} h={13}>
          <path d="M6.500 2v10M.5 1.500h4l2 1 2-1h4v9h-4l-2 1.500-2-1.500h-4zM2 4.500h3M2 6.500h3M2 8.500h3M8 4.500h3M8 6.500h3M8 8.500h3" />
        </Icon>
      </button>
      <button aria-label="页面视图" className="flex h-full w-[38px] items-center justify-center bg-[#c8c8c8]">
        <Icon w={14} h={13}>
          <path d="M.5.5h13v12H.5zM2 2.500h10M2 4.500h10M2 6.500h10M2 8.500h10M2 10.500h10" />
        </Icon>
      </button>
      <button aria-label="Web 版式视图" className="flex h-full w-[38px] items-center justify-center">
        <Icon w={14} h={13}>
          <path d="M6 10.500H.5V.5h10V5M2 2.500h7M2 4.500h7M2 6.500h4M2 8.500h3" />
          <circle cx="9.500" cy="8.500" r="4" fill="#666" stroke="none" />
          <path d="M7 8l2 1v2M10 6l2 2" stroke="#eee" />
        </Icon>
      </button>
      <button aria-label="缩小" className="ml-[2px] flex w-3 justify-center">
        <Icon w={6} h={2}><path d="M0 1h6" strokeWidth="2" /></Icon>
      </button>
      <input
        type="range"
        aria-label="显示比例"
        defaultValue="45"
        className="mx-px h-3 w-[100px] appearance-none bg-[linear-gradient(#999,#999)] bg-[length:100%_1px] bg-center bg-no-repeat [&::-webkit-slider-thumb]:h-[11px] [&::-webkit-slider-thumb]:w-1 [&::-webkit-slider-thumb]:appearance-none [&::-webkit-slider-thumb]:bg-[#555]"
      />
      <button aria-label="放大" className="ml-[2px] flex w-3 justify-center">
        <Icon w={8} h={8}><path d="M0 4h8M4 0v8" strokeWidth="2" /></Icon>
      </button>
      <button className="ml-3 w-[52px] text-left">90%</button>
    </div>
  </footer>
);

const Watermark = () => (
  <div className="pointer-events-none absolute bottom-0 right-0 h-[52px] w-[162px]">
    <div className="absolute left-[84px] top-[4px] flex h-[27px] w-[62px] items-center justify-center rounded-md border-2 border-[#999] bg-white text-[13px] text-[#222] shadow">
      CH の 简
    </div>
    <div className="absolute inset-0 flex items-start opacity-75">
      <Icon w={44} h={42}>
        <path d="M43 2C25 0 6 10 3 22c-2 8 3 13 9 11C4 25 12 10 43 2z" fill="#2f8fd8" stroke="none" />
        <path d="M8 33c-2-10 6-19 17-18-9 2-12 8-9 13 2 3 8 3 10-1-1 7-9 12-18 6z" fill="#3a6fc4" stroke="none" />
        <path d="M24 16c10-4 20 0 17 8-3 9-16 17-37 17 17-3 29-10 29-17 0-5-4-7-9-8z" fill="#3fae62" stroke="none" />
        <path d="M4 41c8-6 16-5 24-9-6 6-13 9-24 9z" fill="#e2d23c" stroke="none" />
      </Icon>
      <div className="whitespace-nowrap pl-px">
        <div className="text-[21px] font-bold leading-[27px] text-[#2f7fd0]">极光下载站</div>
        <div className="text-[17px] leading-[18px] text-[#3dae60] font-['Liberation_Sans',sans-serif]">www.xz7.com</div>
      </div>
    </div>
  </div>
);

const App = () => {
  return (
    <div className="relative flex h-screen flex-col overflow-hidden bg-[#e6e6e6] text-xs text-[#444] font-['Open_Sans','Noto_Sans_CJK_SC',sans-serif]">
      <header className="shrink-0 bg-[#2b579a]">
        <TitleBar />
        <TabBar />
        <Ribbon />
      </header>
      <QuickAccess />
      <div className="flex min-h-0 flex-1">
        <NavPane />
        <VerticalRuler />
        <Document />
        <ScrollBar />
      </div>
      <StatusBar />
      <Watermark />
    </div>
  );
};

export default App;
